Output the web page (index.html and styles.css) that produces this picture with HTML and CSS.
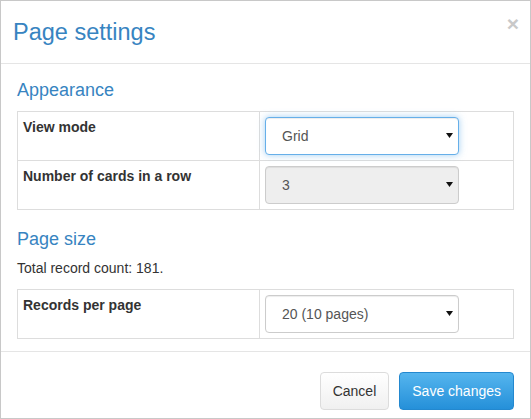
FILE: index.html
```html
<!DOCTYPE html>
<html lang="en">
<head>
<meta charset="utf-8">
<title>Page settings</title>
<link rel="stylesheet" href="styles.css">
</head>
<body>
<div class="modal">
  <div class="modal-header">
    <h4 class="modal-title">Page settings</h4>
    <button class="close" type="button" aria-label="Close">&times;</button>
  </div>
  <div class="modal-body">
    <h3 class="section-title">Appearance</h3>
    <div class="grid-table">
      <div class="cell label">View mode</div>
      <div class="cell control">
        <div class="select-wrap">
          <select class="form-control focused"><option>Grid</option></select>
          <svg class="caret" width="7" height="5" viewBox="0 0 7 5"><path d="M0 0H7L3.5 5Z" fill="#111"/></svg>
        </div>
      </div>
      <div class="cell label">Number of cards in a row</div>
      <div class="cell control">
        <div class="select-wrap">
          <select class="form-control" disabled><option>3</option></select>
          <svg class="caret" width="7" height="5" viewBox="0 0 7 5"><path d="M0 0H7L3.5 5Z" fill="#111"/></svg>
        </div>
      </div>
    </div>
    <h3 class="section-title second">Page size</h3>
    <p class="note">Total record count: 181.</p>
    <div class="grid-table">
      <div class="cell label">Records per page</div>
      <div class="cell control">
        <div class="select-wrap">
          <select class="form-control"><option>20 (10 pages)</option></select>
          <svg class="caret" width="7" height="5" viewBox="0 0 7 5"><path d="M0 0H7L3.5 5Z" fill="#111"/></svg>
        </div>
      </div>
    </div>
  </div>
  <div class="modal-footer">
    <button class="btn btn-default" type="button">Cancel</button>
    <button class="btn btn-primary" type="button">Save changes</button>
  </div>
</div>
</body>
</html>
```

FILE: styles.css
```css
* { box-sizing: border-box; }
html, body {
  margin: 0;
  padding: 0;
  background: #fff;
}
body {
  font-family: "Liberation Sans", Arial, sans-serif;
  font-size: 14px;
  line-height: 20px;
  color: #333;
}
.modal {
  width: 531px;
  height: 419px;
  border: 1px solid #c8c8c8;
  display: flex;
  flex-direction: column;
  background: #fff;
}
.modal-header {
  display: flex;
  justify-content: space-between;
  align-items: flex-start;
  padding: 18px 11px 18px 12px;
  border-bottom: 1px solid #e5e5e5;
}
.modal-title {
  margin: 0;
  font-size: 23.5px;
  line-height: 26px;
  font-weight: normal;
  color: #3784c1;
}
.close {
  margin: 0;
  padding: 0;
  border: 0;
  background: transparent;
  font-family: "Liberation Sans", Arial, sans-serif;
  font-size: 21px;
  font-weight: bold;
  line-height: 1;
  color: #c9c9c9;
  margin-top: -6px;
  cursor: pointer;
}
.modal-body {
  padding: 16px 16px 12px 16px;
}
.section-title {
  margin: 0 0 11px 0;
  font-size: 18px;
  line-height: 20px;
  font-weight: normal;
  color: #3784c1;
}
.section-title.second {
  margin-top: 19px;
  margin-bottom: 9px;
}
.note {
  margin: 0 0 11px 0;
}
.grid-table {
  display: grid;
  grid-template-columns: 242px 1fr;
  border-top: 1px solid #ddd;
  border-left: 1px solid #ddd;
}
.cell {
  border-right: 1px solid #ddd;
  border-bottom: 1px solid #ddd;
  padding: 5px;
  min-height: 49px;
}
.cell.label {
  font-weight: bold;
}
.select-wrap {
  position: relative;
  width: 194px;
}
.form-control {
  display: block;
  width: 100%;
  height: 38px;
  margin: 0;
  padding: 0 24px 0 16px;
  font-family: "Liberation Sans", Arial, sans-serif;
  font-size: 14px;
  color: #555;
  background: #fff;
  border: 1px solid #ccc;
  border-radius: 4px;
  -webkit-appearance: none;
  appearance: none;
  box-shadow: inset 0 1px 1px rgba(0,0,0,.075);
  outline: none;
}
.form-control.focused {
  border-color: #66afe9;
  box-shadow: inset 0 1px 1px rgba(0,0,0,.075), 0 0 7px rgba(102,175,233,.6);
}
.form-control:disabled {
  background: #eee;
  color: #555;
  opacity: 1;
}
.caret {
  position: absolute;
  right: 6px;
  top: 16px;
  pointer-events: none;
}
.modal-footer {
  margin-top: auto;
  display: flex;
  justify-content: flex-end;
  gap: 10px;
  padding: 20px 16px 8px 16px;
  border-top: 1px solid #e5e5e5;
  height: 67px;
}
.btn {
  height: 38px;
  padding: 0 12px;
  font-family: "Liberation Sans", Arial, sans-serif;
  font-size: 14px;
  border-radius: 4px;
  border: 1px solid;
  cursor: pointer;
}
.btn-default {
  color: #333;
  background: linear-gradient(#fff, #f0f0f0);
  border-color: #dcdcdc;
}
.btn-primary {
  color: #fff;
  background: linear-gradient(#55b5ee, #2590d9);
  border-color: #2388cf;
}
```
